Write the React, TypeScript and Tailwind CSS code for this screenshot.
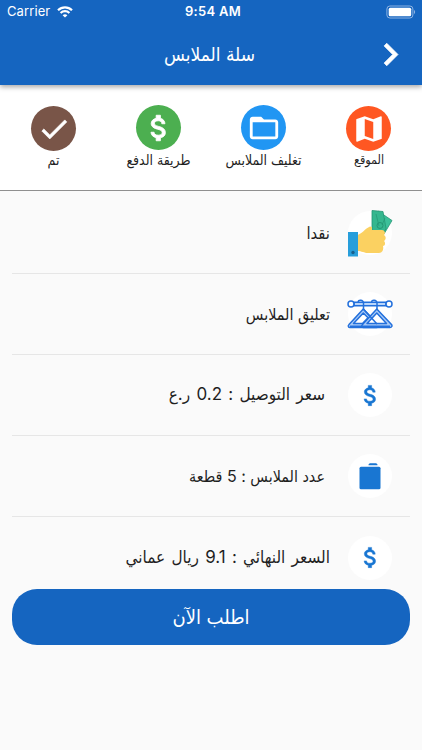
import React from "react";
import {
  MdAttachMoney,
  MdCheck,
  MdChevronRight,
  MdFolderOpen,
  MdMap,
} from "react-icons/md";

const steps = [
  { label: "الموقع", color: "bg-[#ff5722]", icon: <MdMap size={34} />, text: "-mt-px pl-px text-[12.5px]", top: "mt-px" },
  { label: "تغليف الملابس", color: "bg-[#2196f3]", icon: <MdFolderOpen size={34} />, text: "text-[14px]", top: "" },
  {
    label: "طريقة الدفع",
    color: "bg-[#4caf50]",
    icon: <MdAttachMoney size={34} className="[&>path:last-child]:stroke-white [&>path:last-child]:[stroke-width:0.6]" />,
    text: "text-[14px]",
    top: "",
  },
  {
    label: "تم",
    color: "bg-[#795548]",
    icon: <MdCheck size={34} className="[&>path:last-child]:stroke-white [&>path:last-child]:[stroke-width:0.5]" />,
    text: "-mt-px text-[14px]",
    top: "mt-px",
  },
];

const CashIcon = () => (
  <svg width="46" height="48" viewBox="-1 -1 46 48">
    <path d="M30 1 44 10.500 36 24H25z" fill="#3cc09a" stroke="#249674" strokeWidth="0.8" />
    <path d="M24 .5 35 1.500l3 17-2 4H24z" fill="#35b78f" stroke="#249674" strokeWidth="0.8" />
    <circle cx="32" cy="15.500" r="3" fill="none" stroke="#249674" />
    <path d="M28 4 31 16M37 8l-3 7" stroke="#249674" strokeWidth="0.7" />
    <path d="M9 25c5-1 8-6.500 13-8.500l2 .5v3h10c3.500.5 3.500 4 2 5 2.500 1.500 2 5 0 6 2 2 1 5-1 5 1 4-1 7-4 7H20c-4 0-6-2-11-2z" fill="#fbd161" />
    <path d="M0 22h10v24.500H0z" fill="#279edb" />
    <circle cx="5" cy="42.500" r="1.700" fill="#18608d" />
  </svg>
);

const HangersIcon = () => (
  <svg width="46" height="30" viewBox="0 0 46 30" fill="none" stroke="#2370dc" strokeWidth="1.5" strokeLinejoin="round">
    <path d="M7 3.200h32v3.600H7z" fill="#b9d6fb" />
    <circle cx="4" cy="5" r="3" fill="#fff" />
    <circle cx="42" cy="5" r="3" fill="#fff" />
    <path d="M11 3c.5-2.500 5-2.500 5.500 1v6M24.500 3c.5-2.500 5-2.500 5.500 1v6" />
    <path d="M16.300 10 31 25.500c1 1.500 0 3-1.500 3H3c-1.700 0-2.300-1.800-1-3z" fill="#a9cbf8" />
    <path d="M29.800 10 44.500 25.500c1 1.200.3 3-1.500 3H16.500c-1.700 0-2.300-1.800-1-3z" fill="#a9cbf8" />
    <path d="M29.800 14 39.500 24.500H20z" fill="#fff" />
    <path d="M16.300 14 21 18.800 15.500 24.500H6.500z" fill="#fff" />
    <path d="M16.300 10 30 25" />
    <path d="M3 27.500h40" strokeWidth="2" />
  </svg>
);

const BagIcon = () => (
  <svg width="22" height="27" viewBox="0 0 22 27" fill="#1976d2">
    <path d="M9.500 1.700c.3-1 1-1.500 2-1.500h5c1 0 1.700.5 2 1.500v.6h-9z" />
    <rect x="0.500" y="3.700" width="21" height="22.500" rx="1.500" />
  </svg>
);

const PriceIcon = () => (
  <MdAttachMoney size={27} className="[&>path:last-child]:stroke-[#1976d2] [&>path:last-child]:[stroke-width:0.4]" />
);

const rows = [
  { label: "نقدا", icon: <CashIcon />, text: "mr-[18px] text-[16.5px]" },
  { label: "تعليق الملابس", icon: <HangersIcon />, text: "mr-[18px] text-[16px]" },
  { label: "سعر التوصيل : 0.2 ر.ع", icon: <PriceIcon />, text: "mr-[23px] text-[17px] [word-spacing:1.500px]" },
  { label: "عدد الملابس : 5 قطعة", icon: <BagIcon />, text: "mr-[23px] text-[16px]" },
  { label: "السعر النهائي : 9.1 ريال عماني", icon: <PriceIcon />, text: "mr-[18px] text-[17px] [word-spacing:1.500px]" },
];

const StatusBar: React.FC = () => (
  <div dir="ltr" className="grid h-6 grid-cols-3 items-center pl-[7px] pr-[6px] text-[13px]">
    <div className="flex items-center gap-[7px]">
      <span className="tracking-[0.1px]">Carrier</span>
      <svg width="16" height="12" viewBox="0 0 16 12" fill="none" stroke="white" strokeWidth="2.200">
        <path d="M1 4.200c4-3.900 10-3.900 14 0M3.600 7c2.500-2.400 6.300-2.400 8.800 0" />
        <path d="M8 11.600 5.600 9.200c1.400-1.300 3.400-1.300 4.800 0z" fill="white" stroke="none" />
      </svg>
    </div>
    <span className="ml-[3px] text-center font-semibold tracking-[0.3px]">9:54 AM</span>
    <svg className="justify-self-end" width="30" height="14" viewBox="0 0 30 14">
      <rect x="0.900" y="1" width="26" height="12" rx="3" fill="none" stroke="#8db3e2" />
      <rect x="2.700" y="2.800" width="22.500" height="8.400" rx="1.500" fill="white" />
      <path d="M28 5v4c1.500-.5 1.500-3.500 0-4z" fill="#8db3e2" />
    </svg>
  </div>
);

const App: React.FC = () => {
  return (
    <div
      dir="rtl"
      className="flex h-[750px] w-[422px] flex-col overflow-hidden bg-[#fafafa] font-['Inter','DejaVu_Sans_Condensed','DejaVu_Sans',sans-serif] text-[#1f1f1f]"
    >
      {/* App bar */}
      <header className="z-10 h-[85px] shrink-0 bg-[#1565c0] text-white shadow-[0_2px_5px_rgba(0,0,0,0.35)]">
        <StatusBar />
        <div className="grid h-[60px] grid-cols-[64px_1fr_64px] items-center">
          <MdChevronRight
            size={45}
            className="mr-[9px] [&>path:last-child]:stroke-white [&>path:last-child]:[stroke-width:0.4]"
          />
          <h1 className="pr-[3px] text-center text-[19px] leading-none">سلة الملابس</h1>
        </div>
      </header>

      {/* Steps */}
      <section className="flex h-[106px] shrink-0 justify-between border-b border-[#8f8f8f] bg-white px-[31px] pt-5">
        {steps.map((step) => (
          <div key={step.label} className={`flex w-[45px] flex-col items-center ${step.top}`}>
            <div className={`flex size-[45px] shrink-0 items-center justify-center rounded-full text-white ${step.color}`}>
              {step.icon}
            </div>
            <span className={`whitespace-nowrap leading-5 ${step.text}`}>{step.label}</span>
          </div>
        ))}
      </section>

      {/* Order summary */}
      <main className="px-3 pt-[2px]">
        {rows.map((row) => (
          <div
            key={row.label}
            className="flex h-[81px] items-center border-b border-[#e6e6e6] pr-[18px] last:border-0"
          >
            <div className="flex size-11 shrink-0 items-center justify-center rounded-full bg-white text-[#1976d2] [&>svg]:shrink-0">
              {row.icon}
            </div>
            <span className={`whitespace-nowrap ${row.text}`}>{row.label}</span>
          </div>
        ))}
      </main>

      <button className="relative mx-3 -mt-[9px] h-14 shrink-0 rounded-[25px] bg-[#1565c0] text-[20px] text-white">
        اطلب الآن
      </button>
    </div>
  );
};

export default App;
